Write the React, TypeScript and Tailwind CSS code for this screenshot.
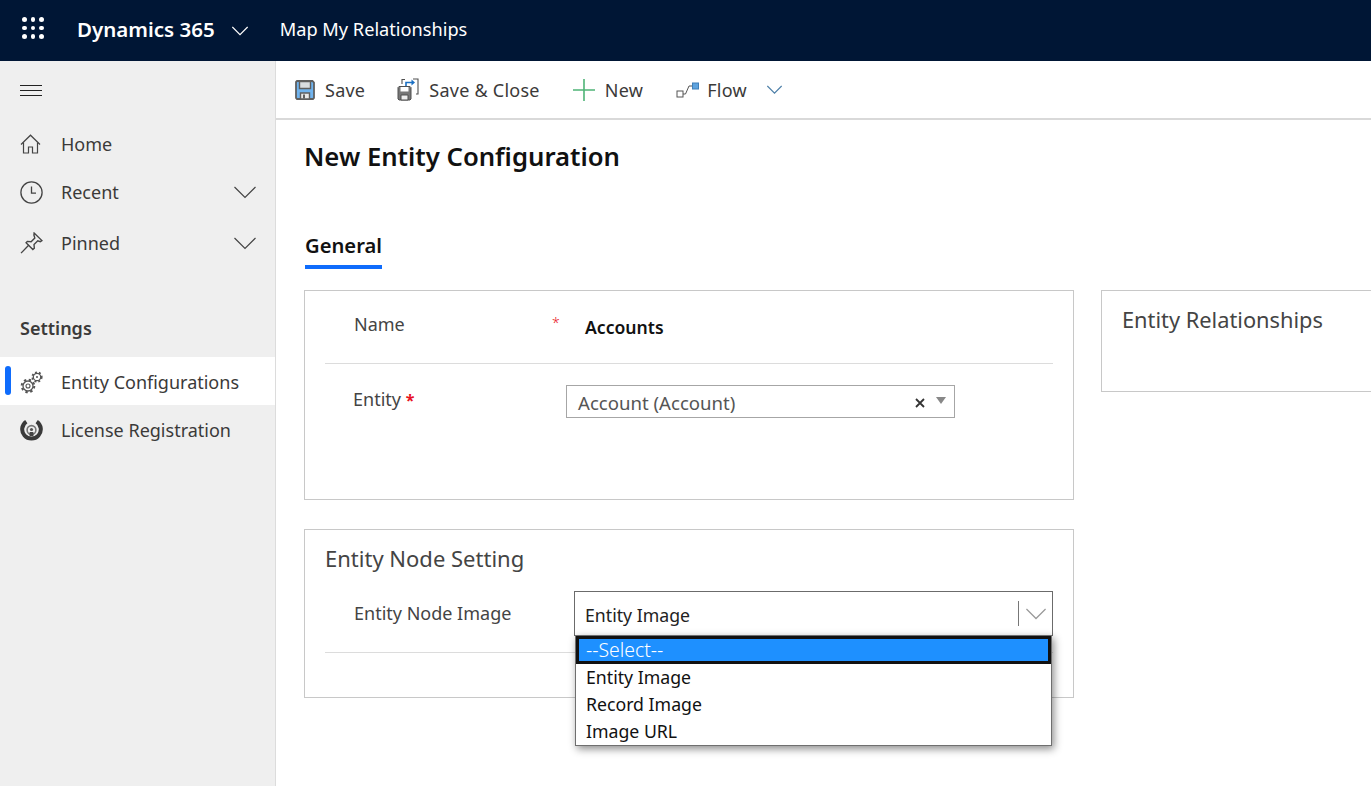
const font = "font-['Noto_Sans','Open_Sans',sans-serif]";

function Chevron({ width, color, className }: { width: number; color: string; className?: string }) {
  return (
    <svg width={width} height={width / 2 + 2} viewBox="0 0 22 13" className={className} fill="none" stroke={color} strokeWidth="1.2">
      <path d="M.5 1 11 11.5 21.5 1" vectorEffect="non-scaling-stroke" />
    </svg>
  );
}

function Waffle() {
  return (
    <div className="grid w-[22px] grid-cols-3 gap-[4px]">
      {Array.from({ length: 9 }).map((_, i) => (
        <span key={i} className="h-[4.5px] w-[4.5px] rounded-full bg-white" />
      ))}
    </div>
  );
}

function HomeIcon() {
  return (
    <svg width="21" height="20" viewBox="0 0 21 20" fill="none" stroke="#444" strokeWidth="1.2">
      <path d="M1 10.5 10.5 1.2 20 10.5" />
      <path d="M3.5 8.5v10.5h5v-6h4v6h5V8.5" />
    </svg>
  );
}

function ClockIcon() {
  return (
    <svg width="23" height="23" viewBox="0 0 23 23" fill="none" stroke="#444" strokeWidth="1.3">
      <circle cx="11.5" cy="11.5" r="10.6" />
      <path d="M11.5 5.5v6.7h4.5" />
    </svg>
  );
}

function PinIcon() {
  return (
    <svg width="23" height="22" viewBox="0 0 22 21" fill="none" stroke="#444" strokeWidth="1.3">
      <path d="M13.5 1 21 8.2l-1.6 1-2.4-.8-3.6 3.6.3 3.6-1.4 1.2L5.8 10.3 7 9l3.6.3 3.6-3.6-.9-2.8z" />
      <path d="M8.5 12.5 1 20.2" />
    </svg>
  );
}

function SaveIcon() {
  return (
    <svg width="20" height="20" viewBox="0 0 20 20">
      <path d="M1 2 2 1h15.5L19 2.5V18l-1 1H2l-1-1z" fill="#6fb3ee" stroke="#5f5f5f" strokeWidth="1.8" />
      <path d="M4.5 1.5h11v7h-11z" fill="#d9dde0" stroke="#5f5f5f" strokeWidth="1.4" />
      <path d="M5.5 19v-6h9v6z" fill="#e8e8e8" stroke="#5f5f5f" strokeWidth="1.4" />
      <path d="M8 14.5h2v4H8z" fill="#5f5f5f" />
    </svg>
  );
}

function SaveCloseIcon() {
  return (
    <svg width="22" height="23" viewBox="0 0 22 23">
      <path d="M1 9.5 2 8.5h11l1 1v11.5l-1 1H2l-1-1z" fill="#777" stroke="#505050" />
      <path d="M3.5 9h8v4.5h-8z" fill="#fff" />
      <path d="M4 17h7v5H4z" fill="#eee" stroke="#505050" />
      <path d="M5 6V1.5h3M16 1h5v15h-2" fill="none" stroke="#505050" strokeWidth="1.1" />
      <path d="M9 8V4.5h7" fill="none" stroke="#1b70c4" strokeWidth="1.6" />
      <path d="m14.5 1.5 3.5 3-3.5 3z" fill="#1b70c4" />
    </svg>
  );
}

function PlusIcon() {
  return (
    <svg width="22" height="22" viewBox="0 0 22 22" stroke="#4fb477" strokeWidth="1.6">
      <path d="M11 0v22M0 11h22" />
    </svg>
  );
}

function FlowIcon() {
  return (
    <svg width="23" height="16" viewBox="0 0 23 16">
      <rect x="1" y="9" width="6" height="6" fill="#fff" stroke="#555" />
      <path d="M7 12h2.5L13 4h3" fill="none" stroke="#555" />
      <rect x="16.5" y="1" width="6" height="6" fill="#5fa3de" stroke="#3f7fb8" />
    </svg>
  );
}

function GearsIcon() {
  return (
    <svg width="23" height="23" viewBox="0 0 23 23" fill="none" stroke="#555">
      <circle cx="8" cy="15" r="5" strokeWidth="1.3" />
      <circle cx="8" cy="15" r="6.3" strokeWidth="2" strokeDasharray="2.4 2.55" />
      <circle cx="8" cy="15" r="2" strokeWidth="1.1" />
      <circle cx="17" cy="6" r="3.7" strokeWidth="1.2" />
      <circle cx="17" cy="6" r="4.7" strokeWidth="1.8" strokeDasharray="1.9 2.02" />
      <circle cx="17" cy="6" r="1" fill="#555" stroke="none" />
    </svg>
  );
}

function LicenseIcon() {
  return (
    <svg width="23" height="23" viewBox="0 0 23 23" fill="none">
      <path d="M6.3 2.6a9.3 9.3 0 1 0 10.4 0" stroke="#3a3a3a" strokeWidth="4" />
      <circle cx="11.5" cy="11" r="4.4" stroke="#777" strokeWidth="1.6" />
      <circle cx="11.5" cy="10.5" r="1.6" fill="#555" />
      <path d="M9.6 17V13h3.8v4z" fill="#444" />
    </svg>
  );
}

function NavItem({
  icon,
  label,
  chevron,
  active,
  className,
}: {
  icon: React.ReactNode;
  label: string;
  chevron?: boolean;
  active?: boolean;
  className?: string;
}) {
  return (
    <div className={`relative flex h-12 items-center pl-5 pr-[19px] ${active ? "bg-white" : ""} ${className ?? ""}`}>
      {active && <span className="absolute left-[5px] top-[9px] h-[29px] w-[6px] rounded-full bg-[#0f6cfc]" />}
      <span className="flex w-[41px] shrink-0 items-center">{icon}</span>
      <span className="flex-1 text-[18px] text-[#3b3a39]">{label}</span>
      {chevron && <Chevron width={22} color="#444" />}
    </div>
  );
}

function ToolButton({ icon, label, className }: { icon: React.ReactNode; label: string; className?: string }) {
  return (
    <div className={`flex items-center ${className ?? ""}`}>
      {icon}
      <span className="pt-[2px] text-[18px] tracking-[0.25px] text-[#3b3a39]">{label}</span>
    </div>
  );
}

export default function App() {
  return (
    <div className={`flex h-[786px] w-[1371px] flex-col overflow-hidden bg-white ${font}`}>
      <header className="flex h-[61px] shrink-0 items-center bg-[#001635] pb-[2px] text-white">
        <div className="mb-[3px] ml-[22px] mr-[33px]">
          <Waffle />
        </div>
        <span className="text-[20.5px] font-semibold">Dynamics 365</span>
        <Chevron width={16} color="#fff" className="ml-[17px] mt-[2px]" />
        <span className="ml-[32px] text-[18.2px]">Map My Relationships</span>
      </header>

      <div className="flex min-h-0 flex-1">
        <aside className="w-[276px] shrink-0 border-r border-[#dcdcdc] bg-[#efefef]">
          <div className="flex h-[59px] flex-col justify-center gap-[4px] pl-[20px]">
            <span className="h-px w-[22px] bg-[#222]" />
            <span className="h-px w-[22px] bg-[#222]" />
            <span className="h-px w-[22px] bg-[#222]" />
          </div>
          <NavItem icon={<HomeIcon />} label="Home" />
          <NavItem icon={<ClockIcon />} label="Recent" chevron />
          <NavItem icon={<PinIcon />} label="Pinned" chevron className="mt-[3px]" />
          <div className="mb-[17px] mt-[49px] pl-5 text-[18px] font-semibold leading-[24px] text-[#3b3a39]">Settings</div>
          <NavItem icon={<GearsIcon />} label="Entity Configurations" active className="pt-[2px]" />
          <NavItem icon={<LicenseIcon />} label="License Registration" className="pt-[2px]" />
        </aside>

        <main className="min-w-0 flex-1">
          <div className="flex h-[59px] items-center border-b-2 border-[#d9d9d9] pl-[19px]">
            <ToolButton icon={<span className="mr-[10px] flex"><SaveIcon /></span>} label="Save" />
            <ToolButton icon={<span className="mr-[10px] flex"><SaveCloseIcon /></span>} label="Save & Close" className="ml-[32px]" />
            <ToolButton icon={<span className="mr-[10px] flex"><PlusIcon /></span>} label="New" className="ml-[33px]" />
            <ToolButton icon={<span className="mr-[8px] flex"><FlowIcon /></span>} label="Flow" className="ml-[33px]" />
            <Chevron width={15} color="#4d7fa8" className="ml-[20px]" />
          </div>

          <div className="pl-[28px]">
            <h1 className="mt-[19px] text-[25.7px] font-semibold leading-[36px] text-[#111]">New Entity Configuration</h1>
            <div className="ml-px mt-[56px] inline-block border-b-[4px] border-[#0f6cfc] pb-[6px]">
              <span className="text-[20.2px] font-semibold leading-[28px] text-[#111]">General</span>
            </div>

            <div className="mt-[21px] flex items-start gap-[27px]">
              <div className="w-[770px] shrink-0">
                <section className="h-[210px] border border-[#c8c8c8] px-5">
                  <div className="flex h-[73px] items-start border-b border-[#dcdcdc]">
                    <span className="ml-[29px] mt-[20px] w-[198px] text-[18px] leading-[26px] text-[#444]">Name</span>
                    <span className="mt-[22px] w-[33px] text-[14px] font-light leading-[20px] text-[#e81123]">*</span>
                    <span className="mt-[23px] text-[17.6px] font-semibold leading-[26px] text-[#111]">Accounts</span>
                  </div>
                  <div className="flex items-start">
                    <span className="ml-[28px] mt-[22px] w-[213px] text-[18px] leading-[26px] text-[#444]">
                      Entity <b className="text-[16px] text-[#e81123]">*</b>
                    </span>
                    <div className="mt-[21px] flex h-[33px] w-[389px] items-center border border-[#a6a6a6] pl-[11px] pr-[8px]">
                      <span className="flex-1 pt-[3px] text-[18.6px] leading-[26px] text-[#555]">Account (Account)</span>
                      <svg width="10" height="10" viewBox="0 0 10 10" className="mr-[11px] mt-[3px]" stroke="#333" strokeWidth="1.8">
                        <path d="m1 1 8 8M9 1 1 9" />
                      </svg>
                      <span className="mb-[3px] h-0 w-0 border-x-[5.5px] border-t-[7px] border-x-transparent border-t-[#888]" />
                    </div>
                  </div>
                </section>

                <section className="relative mt-[29px] h-[169px] border border-[#c8c8c8] px-5">
                  <h2 className="mt-[13px] text-[22px] leading-[30px] text-[#444]">Entity Node Setting</h2>
                  <div className="flex h-[80px] items-start border-b border-[#dcdcdc]">
                    <span className="ml-[29px] mt-[27px] w-[220px] text-[18px] leading-[26px] text-[#444]">Entity Node Image</span>
                    <div className="mt-[18px] flex h-[45px] w-[479px] items-center border border-[#6b6b6b] pl-[10px] pr-[6px]">
                      <span className="flex-1 pt-[2px] text-[17.7px] leading-[26px] text-[#222]">Entity Image</span>
                      <span className="mr-[7px] h-[25px] w-px bg-[#777]" />
                      <Chevron width={20} color="#999" />
                    </div>
                  </div>
                  <ul className="absolute left-[270px] top-[105px] w-[477px] border border-[#6f6f6f] bg-white text-[17.7px] leading-[27px] text-[#111] shadow-[2px_3px_8px_rgba(0,0,0,0.45)]">
                    <li className="h-[28px] border-[3px] border-[#111] bg-[#1e90ff] pl-[7px] text-[19.4px] font-light leading-[22px] text-white">--Select--</li>
                    <li className="pl-[10px]">Entity Image</li>
                    <li className="pl-[10px]">Record Image</li>
                    <li className="h-[27px] pl-[10px]">Image URL</li>
                  </ul>
                </section>
              </div>

              <section className="h-[102px] flex-1 border-y border-l border-[#c8c8c8] pl-5 pt-[14px]">
                <h2 className="text-[21.8px] leading-[30px] text-[#444]">Entity Relationships</h2>
              </section>
            </div>
          </div>
        </main>
      </div>
    </div>
  );
}
